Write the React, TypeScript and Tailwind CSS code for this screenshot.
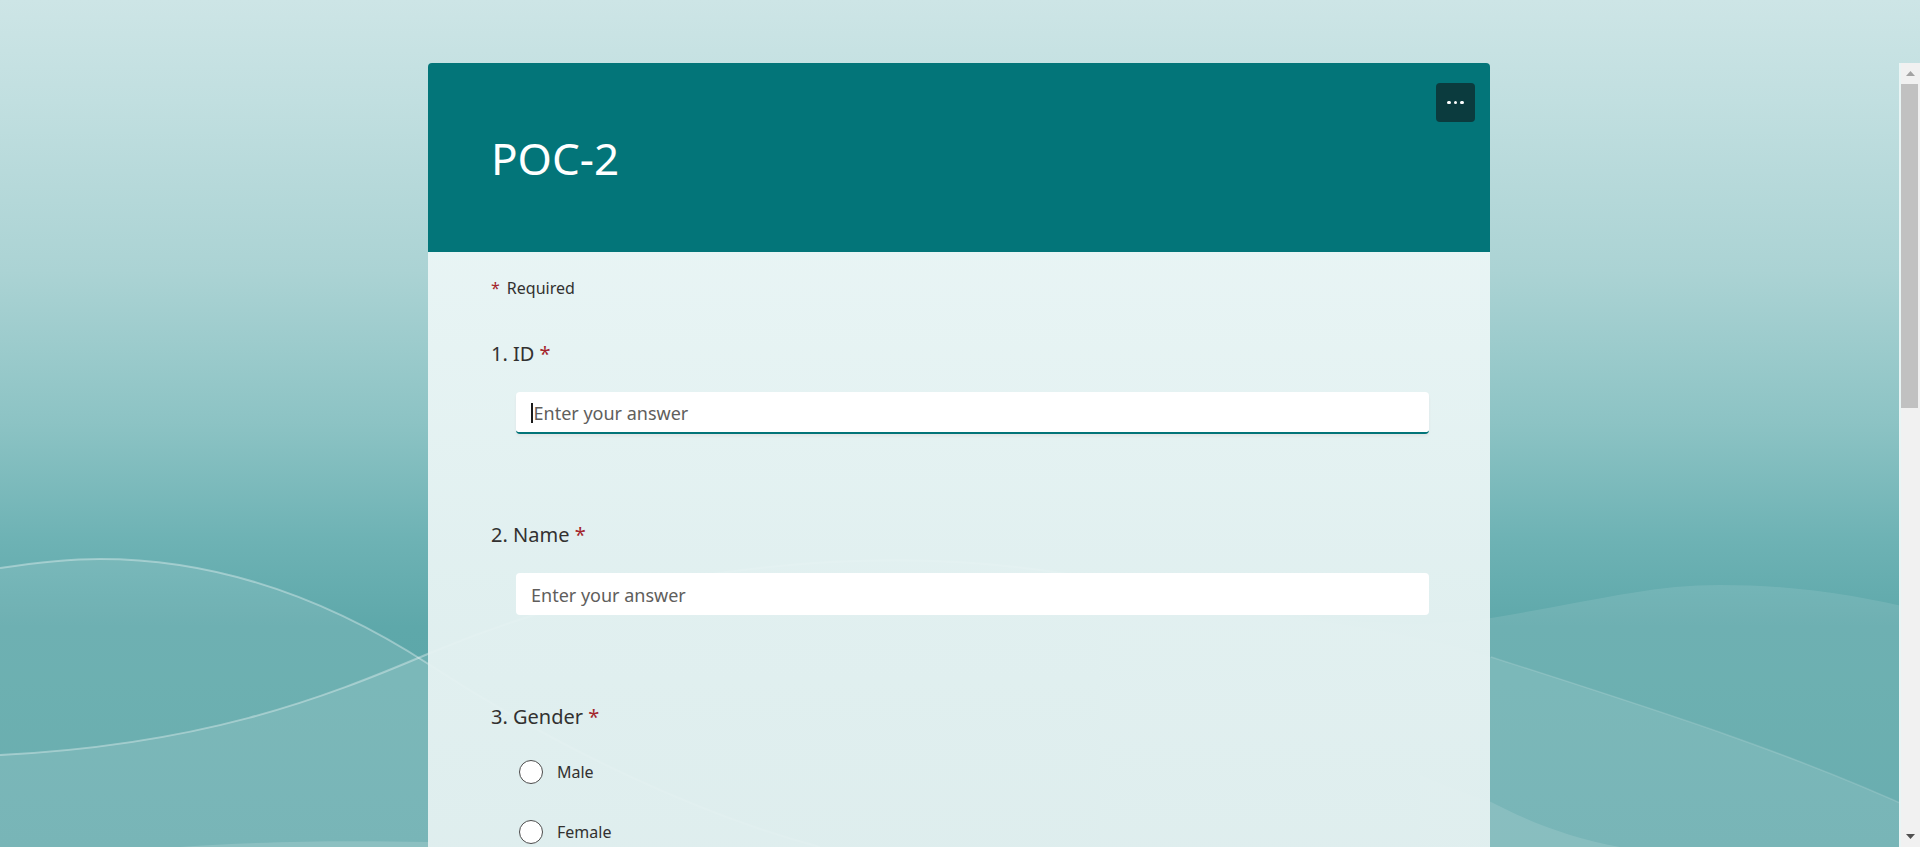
import React from "react";

function Waves() {
  return (
    <svg
      className="pointer-events-none absolute inset-0 h-full w-full"
      viewBox="0 0 1920 847"
      preserveAspectRatio="none"
    >
      <path
        d="M0,568 C40,562 70,559 100,559 C220,559 330,600 430,665 C560,750 700,815 820,847 L0,847 Z"
        fill="#ffffff"
        fillOpacity="0.1"
      />
      <path
        d="M0,755 C200,745 320,700 430,653 C650,560 900,540 1100,580 C1300,620 1400,632 1491,618 C1600,600 1650,585 1720,585 C1800,585 1860,596 1920,610 L1920,847 L0,847 Z"
        fill="#ffffff"
        fillOpacity="0.1"
      />
      <path
        d="M1100,600 C1300,612 1430,636 1491,657 C1650,708 1790,752 1920,812 L1920,847 L1100,847 Z"
        fill="#ffffff"
        fillOpacity="0.1"
      />
      <path
        d="M1420,775 C1450,788 1470,795 1491,802 C1530,822 1570,838 1620,847 L1420,847 Z"
        fill="#ffffff"
        fillOpacity="0.12"
      />
      <path
        d="M180,847 C250,842 330,840 430,842 L430,847 Z"
        fill="#ffffff"
        fillOpacity="0.15"
      />
      <path
        d="M0,568 C40,562 70,559 100,559 C220,559 330,600 430,665 C560,750 700,815 820,847"
        fill="none"
        stroke="#ffffff"
        strokeOpacity="0.35"
        strokeWidth="2"
      />
      <path
        d="M0,755 C200,745 320,700 430,653 C650,560 900,540 1100,580"
        fill="none"
        stroke="#ffffff"
        strokeOpacity="0.35"
        strokeWidth="2"
      />
      <path
        d="M1491,657 C1650,708 1790,752 1920,812"
        fill="none"
        stroke="#ffffff"
        strokeOpacity="0.15"
        strokeWidth="1.5"
      />
    </svg>
  );
}

function Scrollbar() {
  return (
    <div className="flex w-[21px] shrink-0 flex-col border-l-2 border-[#e9f5f5] bg-[#f1f1f1]">
      <div className="flex h-[21px] items-center justify-center">
        <svg width="9" height="5" viewBox="0 0 9 5">
          <path d="M0 5 L4.5 0 L9 5 Z" fill="#a3a3a3" />
        </svg>
      </div>
      <div className="h-[324px] w-[17px] bg-[#c1c1c1]" />
      <div className="flex-1" />
      <div className="flex h-[21px] items-center justify-center">
        <svg width="9" height="5" viewBox="0 0 9 5">
          <path d="M0 0 L9 0 L4.5 5 Z" fill="#505050" />
        </svg>
      </div>
    </div>
  );
}

function Question({ n, label, mt }: { n: number; label: string; mt: string }) {
  return (
    <div className={mt + " text-[20px] leading-[28px] text-[#323130]"}>
      {n}. {label} <span className="text-[#a4262c]">*</span>
    </div>
  );
}

function TextAnswer({ focused }: { focused?: boolean }) {
  return (
    <div
      className={
        "ml-[25px] mt-[24px] flex h-[42px] items-center rounded-[4px] bg-white pl-[15px] pt-[2px] text-[18px] text-[#605e5c] " +
        (focused ? "border-b-2 border-[#037579] shadow-[0_2px_3px_rgba(164,38,44,0.06)]" : "")
      }
    >
      {focused && <span className="mr-[1px] h-[20px] w-[1.5px] bg-[#1b1b1b]" />}
      <span>Enter your answer</span>
    </div>
  );
}

function Radio({ label, first }: { label: string; first?: boolean }) {
  return (
    <div className={(first ? "mt-[29px]" : "mt-[36px]") + " ml-[28px] flex h-[24px] items-center gap-[14px]"}>
      <span className="h-[24px] w-[24px] rounded-full border border-[#4b4b4b] bg-white" />
      <span className="text-[16px] leading-[24px] text-[#323130]">{label}</span>
    </div>
  );
}

export default function App() {
  return (
    <div className="relative h-[847px] w-full overflow-hidden bg-[linear-gradient(180deg,#cde5e6_0%,#c1dfe0_12%,#abd3d4_32%,#8cc3c4_50%,#6db2b4_64%,#5ea8aa_74%,#59a4a6_100%)] font-['Noto_Sans',sans-serif]">
      <Waves />
      <div className="relative flex h-full flex-col">
        <div className="h-[63px] shrink-0" />
        <div className="flex min-h-0 flex-1">
          <main className="min-w-0 flex-1 overflow-hidden">
            <div className="ml-[428px] w-[1062px]">
              <div className="flex h-[189px] justify-between rounded-t-[4px] bg-[#037579]">
                <h1 className="pl-[63px] pt-[73px] text-[44px] font-normal leading-none text-white">
                  POC-2
                </h1>
                <button className="mr-[15px] mt-[20px] flex h-[39px] w-[39px] items-center justify-center gap-[3px] rounded-[4px] bg-[#0b3b3e]">
                  <span className="h-[3.5px] w-[3.5px] rounded-full bg-white" />
                  <span className="h-[3.5px] w-[3.5px] rounded-full bg-white" />
                  <span className="h-[3.5px] w-[3.5px] rounded-full bg-white" />
                </button>
              </div>
              <div className="min-h-[700px] bg-linear-to-b from-[#ebf6f6]/95 to-[#e3f0f0]/95 pl-[63px] pr-[61px] pt-[24px]">
                <div className="flex text-[16px] leading-[24px] text-[#323130]">
                  <span className="text-[#a4262c]">*</span>
                  <span className="ml-[7px]">Required</span>
                </div>
                <Question n={1} label="ID" mt="mt-[40px]" />
                <TextAnswer focused />
                <Question n={2} label="Name" mt="mt-[87px]" />
                <TextAnswer />
                <Question n={3} label="Gender" mt="mt-[88px]" />
                <Radio label="Male" first />
                <Radio label="Female" />
              </div>
            </div>
          </main>
          <Scrollbar />
        </div>
      </div>
    </div>
  );
}
